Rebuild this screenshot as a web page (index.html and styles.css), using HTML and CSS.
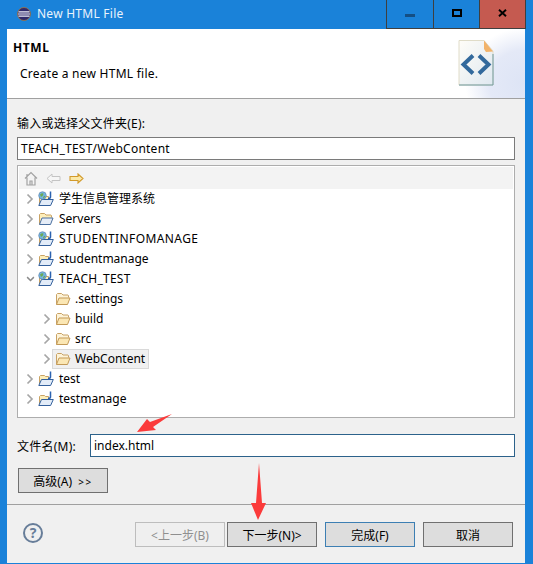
FILE: index.html
```html
<!DOCTYPE html>
<html lang="zh">
<head>
<meta charset="utf-8">
<title>New HTML File</title>
<link rel="stylesheet" href="styles.css">
</head>
<body>
<svg class="defs" width="0" height="0" aria-hidden="true">
  <defs>
    <symbol id="folder" viewBox="0 0 16 14">
      <path d="M1.500 12.500V2.500l1-1h4l1.500 1.500h5l.5 .5v2" fill="#fdf3d8" stroke="#c9a264"/>
      <path d="M1.500 12.500l2.500-6.500h11l-2.500 6.500z" fill="#fbe7b4" stroke="#c39a58" stroke-linejoin="round"/>
    </symbol>
    <symbol id="folder-blue" viewBox="0 0 16 14">
      <path d="M1.500 12.500V2.500l1-1h4l1.500 1.500h5l.5 .5v2" fill="#fdeeb9" stroke="#c9a264"/>
      <path d="M1.500 12.500l2.500-6.500h11l-2.500 6.500z" fill="#e6edf7" stroke="#4a6f9f" stroke-linejoin="round"/>
    </symbol>
    <symbol id="project" viewBox="0 0 16 16">
      <path d="M1.500 14.500V5.500l1-1h4l1 1h3v3" fill="#fdeeb9" stroke="#c9a264"/>
      <path d="M.8 14.500l2.700-6h11.800l-2.700 6z" fill="#e3ecf8" stroke="#34609c" stroke-linejoin="round"/>
      <path d="M12.500 .5v5.500q0 1.500-2.500 1.500" fill="none" stroke="#2b62b0" stroke-width="1.500"/>
    </symbol>
    <symbol id="webproject" viewBox="0 0 16 16">
      <use href="#project" width="16" height="16"/>
      <circle cx="4.500" cy="4.500" r="3.800" fill="#74b4e4" stroke="#5b7fa3" stroke-width=".6"/>
      <path d="M2 3.500q2-2 3.500-1l-.5 2-2 1.500zM5 6l2-1.500v1.500l-1.500 1.500z" fill="#6dab52"/>
    </symbol>
    <symbol id="chev-r" viewBox="0 0 8 12">
      <path d="M1.500 1.500L6 6l-4.500 4.500" fill="none" stroke="#a6a6a6" stroke-width="1.700"/>
    </symbol>
    <symbol id="chev-d" viewBox="0 0 12 8">
      <path d="M1.500 1.500L6 6l4.500-4.500" fill="none" stroke="#8a8a8a" stroke-width="1.900"/>
    </symbol>
  </defs>
</svg>

<div class="window">
  <header class="titlebar">
    <div class="title-left">
      <svg class="app-icon" viewBox="0 0 14 14" width="14" height="14" aria-hidden="true">
        <circle cx="7" cy="7" r="6.500" fill="#2f2a6b" stroke="#b9792f" stroke-width=".7"/>
        <path d="M1.500 4.800h11M1 7h12M1.500 9.200h11" stroke="#f0eef8" stroke-width="1.200"/>
      </svg>
      <span class="title-text wide">New HTML File</span>
    </div>
    <div class="controls">
      <div class="ctl ctl-min"><span class="min-glyph"></span></div>
      <div class="ctl ctl-max"><span class="max-glyph"></span></div>
      <div class="ctl ctl-close">
        <svg viewBox="0 0 9 8" width="9" height="8" aria-hidden="true"><path d="M1 .8L8 7.200M8 .8L1 7.200" stroke="#000" stroke-width="1.900"/></svg>
      </div>
    </div>
  </header>

  <main class="dialog">
    <section class="banner">
      <div class="banner-text">
        <h1 class="banner-title">HTML</h1>
        <p class="banner-desc wide">Create a new HTML file.</p>
      </div>
      <div class="banner-art">
        <svg viewBox="0 0 36 46" width="36" height="46" aria-hidden="true">
          <defs>
            <linearGradient id="page" x1="0" y1="0" x2="1" y2="1">
              <stop offset="0" stop-color="#fffdf8"/>
              <stop offset="1" stop-color="#dfe8f0"/>
            </linearGradient>
          </defs>
          <path d="M1 .5h25l9 10.500V45H1z" fill="url(#page)" stroke="#e0dcc8"/>
          <path d="M1 45h34V14" fill="none" stroke="#6f9aa2"/>
          <path d="M26 .5l9 11-7 .5-2-3z" fill="#f2b36a"/>
          <path d="M15 15.500L5.500 24.500 15 33.500" fill="none" stroke="#32699c" stroke-width="4"/>
          <path d="M21 15.500L30.500 24.500 21 33.500" fill="none" stroke="#32699c" stroke-width="4"/>
        </svg>
      </div>
    </section>

    <section class="form">
      <label class="field-label wide-sm">输入或选择父文件夹(E):</label>
      <div class="input parent-input wide-sm">TEACH_TEST/WebContent</div>

      <div class="tree">
        <div class="tree-tools">
          <svg viewBox="0 0 14 15" width="14" height="15" aria-hidden="true">
            <path d="M1 7.500L7 1.500l6 6M3 6.500V14h8V6.500M3 3v2M6 14v-4h2v4" fill="#f4f4f4" stroke="#a2a2a2" stroke-width="1.200"/>
          </svg>
          <svg viewBox="0 0 15 11" width="15" height="11" aria-hidden="true">
            <path d="M6 1L1 5.500 6 10V7.500h8v-4H6z" fill="#f6f6f6" stroke="#c4c4c4"/>
          </svg>
          <svg viewBox="0 0 15 11" width="15" height="11" aria-hidden="true">
            <path d="M9 1l5 4.500L9 10V7.500H1v-4h8z" fill="#fbe9a8" stroke="#d29a2a" stroke-width="1.100"/>
          </svg>
        </div>
        <div class="row lvl-1"><svg class="chev"><use href="#chev-r"/></svg><svg class="ico"><use href="#webproject"/></svg><span class="name">学生信息管理系统</span></div>
        <div class="row lvl-1"><svg class="chev"><use href="#chev-r"/></svg><svg class="ico ico-open"><use href="#folder-blue"/></svg><span class="name">Servers</span></div>
        <div class="row lvl-1"><svg class="chev"><use href="#chev-r"/></svg><svg class="ico"><use href="#webproject"/></svg><span class="name wide-lg">STUDENTINFOMANAGE</span></div>
        <div class="row lvl-1"><svg class="chev"><use href="#chev-r"/></svg><svg class="ico"><use href="#project"/></svg><span class="name">studentmanage</span></div>
        <div class="row lvl-1"><svg class="chev chev-open"><use href="#chev-d"/></svg><svg class="ico"><use href="#webproject"/></svg><span class="name wide-sm">TEACH_TEST</span></div>
        <div class="row lvl-2"><span class="chev"></span><svg class="ico ico-open"><use href="#folder"/></svg><span class="name">.settings</span></div>
        <div class="row lvl-2"><svg class="chev"><use href="#chev-r"/></svg><svg class="ico ico-open"><use href="#folder"/></svg><span class="name">build</span></div>
        <div class="row lvl-2"><svg class="chev"><use href="#chev-r"/></svg><svg class="ico ico-open"><use href="#folder"/></svg><span class="name">src</span></div>
        <div class="row lvl-2"><svg class="chev"><use href="#chev-r"/></svg><div class="selected"><svg class="ico ico-open"><use href="#folder"/></svg><span class="name">WebContent</span></div></div>
        <div class="row lvl-1"><svg class="chev"><use href="#chev-r"/></svg><svg class="ico"><use href="#project"/></svg><span class="name">test</span></div>
        <div class="row lvl-1"><svg class="chev"><use href="#chev-r"/></svg><svg class="ico"><use href="#project"/></svg><span class="name">testmanage</span></div>
      </div>

      <div class="file-row">
        <label class="file-label wide-sm">文件名(M):</label>
        <div class="input file-input">index.html</div>
      </div>
      <div class="adv-row"><button class="btn btn-adv">高级(A) <span class="adv-arrows">&gt;&gt;</span></button></div>
    </section>

    <footer class="footer">
      <div class="help">?</div>
      <div class="buttons">
        <button class="btn btn-disabled">&lt;上一步(B)</button>
        <button class="btn btn-next">下一步(N)&gt;</button>
        <button class="btn btn-default">完成(F)</button>
        <button class="btn btn-cancel">取消</button>
      </div>
    </footer>
  </main>

  <svg class="annotations" viewBox="0 0 533 564" width="533" height="564" aria-hidden="true">
    <path d="M137 432l10-13 3 3 22-8-19 13 3 3z" fill="#fb3b3b"/>
    <path d="M259 463l3 40h4l-8 17-7-17h5z" fill="#fb3b3b"/>
  </svg>
</div>
</body>
</html>
```

FILE: styles.css
```css
* { box-sizing: border-box; }

html, body {
  margin: 0;
  padding: 0;
}

body {
  width: 533px;
  height: 564px;
  overflow: hidden;
  font-family: "Noto Sans", "Noto Sans CJK SC", sans-serif;
  font-size: 12px;
  color: #000;
}

.wide { letter-spacing: .25px; }
.wide-sm { letter-spacing: .24px; }
.wide-lg { letter-spacing: .4px; }

.defs { position: absolute; }

.window {
  position: relative;
  width: 533px;
  height: 564px;
  display: flex;
  flex-direction: column;
  background: #1a82d9;
}

.titlebar {
  height: 29px;
  display: flex;
  justify-content: space-between;
  flex: none;
}

.title-left {
  display: flex;
  align-items: center;
  gap: 6px;
  padding: 0 0 2px 17px;
}

.app-icon { flex: none; }

.title-text {
  color: #eaf3fb;
  font-size: 12px;
}

.controls {
  display: flex;
  margin-right: 7px;
  height: 29px;
}

.ctl {
  display: flex;
  align-items: center;
  justify-content: center;
  border: 1px solid #3f3f3f;
  border-top: 0;
  margin-left: -1px;
  padding-bottom: 3px;
}

.ctl-min { width: 48px; padding-top: 5px; }
.ctl-max { width: 47px; }
.ctl-close { width: 47px; background: #c55a50; }

.min-glyph {
  display: block;
  width: 10px;
  height: 3px;
  background: #144f84;
}

.max-glyph {
  display: block;
  width: 10px;
  height: 8px;
  border: 2px solid #000;
}

.dialog {
  flex: 1;
  margin: 0 8px 1px 7px;
  background: #f0f0f0;
  display: flex;
  flex-direction: column;
  min-height: 0;
}

.banner {
  height: 70px;
  flex: none;
  border-bottom: 1px solid #a0a0a0;
  display: flex;
  justify-content: space-between;
  background:
    radial-gradient(ellipse 60px 55px at 100% 78%, #dde4f5 0%, #e4e9f7 60%, rgba(255, 255, 255, 0) 100%),
    #fff;
}

.banner-text { padding: 10px 0 0 6px; }

.banner-title {
  margin: 0;
  font-size: 12px;
  font-weight: 700;
  line-height: 17px;
  letter-spacing: .6px;
}

.banner-desc {
  margin: 9px 0 0 7px;
  font-size: 12px;
  line-height: 17px;
}

.banner-art {
  padding: 11px 31px 0 0;
}

.form {
  flex: none;
  padding: 17px 10px 0 10px;
  height: 405px;
}

.field-label {
  display: block;
  line-height: 16px;
  height: 21px;
  font-size: 12px;
}

.input {
  background: #fff;
  height: 23px;
  line-height: 21px;
  padding-left: 3px;
  font-size: 12px;
}

.parent-input {
  border: 1px solid #7a7a7a;
}

.tree {
  margin-top: 5px;
  height: 253px;
  background: #fff;
  border: 1px solid #adadad;
  padding: 1px;
}

.tree-tools {
  height: 22px;
  background: #f3f3f3;
  display: flex;
  align-items: center;
  padding-left: 5px;
  gap: 8px;
}

.row {
  height: 20px;
  display: flex;
  align-items: center;
  white-space: nowrap;
}

.lvl-1 { padding-left: 7px; }
.lvl-2 { padding-left: 24px; }

.chev {
  width: 8px;
  height: 12px;
  flex: none;
  margin-right: 4px;
}

.chev-open {
  width: 9px;
  height: 6px;
  margin-right: 3px;
}

.ico {
  width: 16px;
  height: 16px;
  flex: none;
  margin-right: 5px;
}

.ico-open { height: 14px; }

.lvl-2 .ico { margin-right: 4px; }

.name {
  font-size: 12px;
  line-height: 18px;
}

.selected {
  display: flex;
  align-items: center;
  height: 20px;
  background: #f0f0f0;
  border: 1px solid #d9d9d9;
  padding-right: 3px;
  margin-left: -3px;
}

.selected .ico { margin-left: 2px; }

.file-row {
  display: flex;
  align-items: center;
  margin-top: 16px;
}

.file-label {
  width: 73px;
  flex: none;
}

.file-input {
  flex: 1;
  border: 1px solid #2c628b;
  padding-left: 3px;
}

.adv-row {
  margin-top: 11px;
  padding-left: 1px;
}

.btn {
  width: 90px;
  height: 25px;
  padding: 0;
  border: 1px solid #707070;
  background: #dddddd;
  font-family: inherit;
  font-size: 12px;
  color: #000;
}

.adv-arrows {
  font-size: 10px;
  letter-spacing: 1.500px;
  margin-left: 3px;
}

.btn-disabled {
  color: #8f8f8f;
  background: #efefef;
  border-color: #bdbdbd;
}

.btn-default {
  border-color: #3d7fb3;
  margin-left: 6px;
}

.btn-cancel { margin-left: 6px; }

.footer {
  flex: 1;
  border-top: 1px solid #a0a0a0;
  display: flex;
  align-items: flex-start;
  justify-content: space-between;
  padding: 17px 12px 0 16px;
}

.help {
  width: 20px;
  height: 20px;
  border: 2px solid #677d99;
  border-radius: 50%;
  text-align: center;
  line-height: 16px;
  font-size: 14px;
  font-weight: 700;
  color: #677d99;
  margin-top: 1px;
}

.buttons {
  display: flex;
  gap: 2px;
}

.annotations {
  position: absolute;
  left: 0;
  top: 0;
  pointer-events: none;
}
```
